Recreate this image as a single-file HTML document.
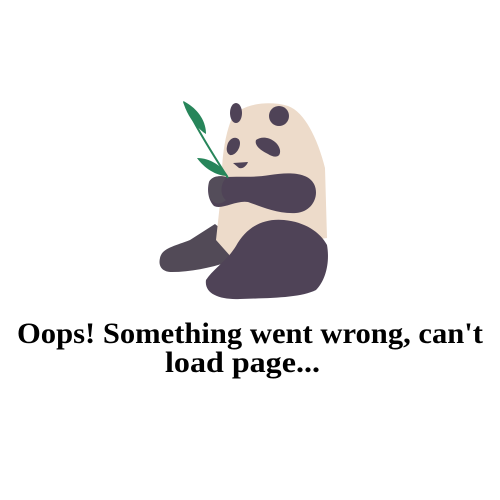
<!DOCTYPE html>
<html><head><style>html,body{margin:0;padding:0;background:#fff;width:500px;height:500px;overflow:hidden}</style></head>
<body>
<svg width="500" height="500" viewBox="0 0 500 500" xmlns="http://www.w3.org/2000/svg">
<!-- left leg -->
<path d="M160 258 C162 248 175 246 190 240 L215 224 L232 238 L228 262 C210 268 190 272 172 272 C162 272 158 266 160 258 Z" fill="#524a57"/>
<!-- cream body -->
<path d="M232 118 C240 104 268 100 288 106 C305 112 318 140 325 168 L327 238 L300 242 L232 258 L216 240 L222 185 C221 160 225 134 232 118 Z" fill="#eddbca"/>
<!-- ears -->
<ellipse cx="236" cy="113" rx="6" ry="10" fill="#4f4357"/>
<ellipse cx="279" cy="116" rx="10" ry="10" fill="#4f4357"/>
<!-- eyes -->
<path d="M228 143 C232 135 240 137 240 143 C240 150 234 156 230 155 C226 153 226 148 228 143 Z" fill="#4f4357"/>
<path d="M256 140 C264 134 278 140 280 150 C281 158 274 158 268 154 C262 151 254 146 256 140 Z" fill="#4f4357"/>
<!-- nose -->
<path d="M233 163 L248 162 C246 167 242 169 239 168 Z" fill="#4f4357"/>
<!-- right leg -->
<path d="M206 280 C214 268 226 262 236 246 C246 228 262 218 284 220 C305 222 320 232 327 245 C330 262 326 280 316 290 C300 298 270 298 240 299 C220 300 204 294 206 280 Z" fill="#4f4357"/>
<!-- arm -->
<path d="M209 182 C212 176 220 175 226 177 C240 176 252 178 270 175 C288 172 308 172 314 184 C320 196 312 212 296 213 C276 214 260 206 248 202 C236 200 222 210 214 206 C208 200 207 190 209 182 Z" fill="#4f4357"/>
<path d="M209 182 C212 176 220 175 226 178 C220 184 220 196 226 200 C220 206 212 204 209 196 Z" fill="#544d5a"/>
<!-- bamboo -->
<path d="M184 102 C192 120 210 150 228 178" stroke="#27855a" stroke-width="2" fill="none"/>
<path d="M183 101 C194 106 206 118 206 134 C196 128 186 114 183 101 Z" fill="#27855a"/>
<path d="M197 158 C210 158 222 166 228 176 C216 176 204 168 197 158 Z" fill="#27855a"/>
<text x="17" y="343" font-family="Liberation Serif, serif" font-weight="bold" font-size="30" textLength="466" lengthAdjust="spacingAndGlyphs" fill="#000">Oops! Something went wrong, can't</text>
<text x="165" y="372" font-family="Liberation Serif, serif" font-weight="bold" font-size="30" textLength="155" lengthAdjust="spacingAndGlyphs" fill="#000">load page...</text>
</svg>
</body></html>
